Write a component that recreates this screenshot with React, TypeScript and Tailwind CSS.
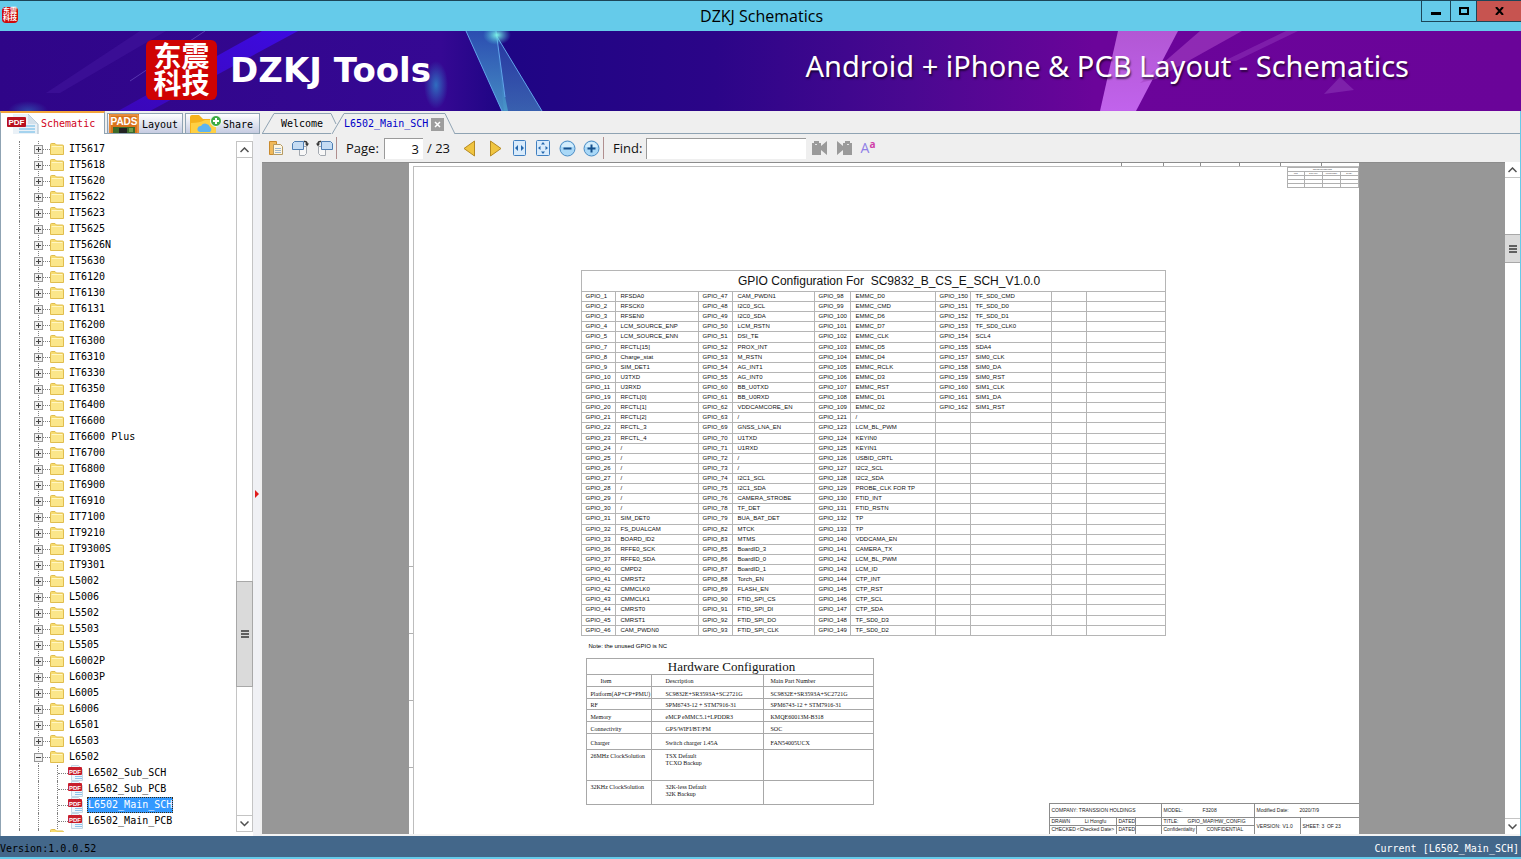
import React, { useState } from "react";

const closedFolders = [
  "IT5617", "IT5618", "IT5620", "IT5622", "IT5623", "IT5625", "IT5626N", "IT5630", "IT6120",
  "IT6130", "IT6131", "IT6200", "IT6300", "IT6310", "IT6330", "IT6350", "IT6400", "IT6600",
  "IT6600 Plus", "IT6700", "IT6800", "IT6900", "IT6910", "IT7100", "IT9210", "IT9300S", "IT9301",
  "L5002", "L5006", "L5502", "L5503", "L5505", "L6002P", "L6003P", "L6005", "L6006", "L6501", "L6503",
];

const openFiles = ["L6502_Sub_SCH", "L6502_Sub_PCB", "L6502_Main_SCH", "L6502_Main_PCB"];

const pinGroups: [number[], string[]][] = [
  [
    [1, 2, 3, 4, 5, 7, 8, 9, 10, 11, 19, 20, 21, 22, 23, 24, 25, 26, 27, 28, 29, 30, 31, 32, 33, 36, 37, 40, 41, 42, 43, 44, 45, 46],
    [
      "RFSDA0", "RFSCK0", "RFSEN0", "LCM_SOURCE_ENP", "LCM_SOURCE_ENN", "RFCTL[15]", "Charge_stat", "SIM_DET1",
      "U3TXD", "U3RXD", "RFCTL[0]", "RFCTL[1]", "RFCTL[2]", "RFCTL_3", "RFCTL_4", "/", "/", "/", "/", "/", "/", "/",
      "SIM_DET0", "FS_DUALCAM", "BOARD_ID2", "RFFE0_SCK", "RFFE0_SDA", "CMPD2", "CMRST2", "CMMCLK0", "CMMCLK1",
      "CMRST0", "CMRST1", "CAM_PWDN0",
    ],
  ],
  [
    [47, 48, 49, 50, 51, 52, 53, 54, 55, 60, 61, 62, 63, 69, 70, 71, 72, 73, 74, 75, 76, 78, 79, 82, 83, 85, 86, 87, 88, 89, 90, 91, 92, 93],
    [
      "CAM_PWDN1", "I2C0_SCL", "I2C0_SDA", "LCM_RSTN", "DSI_TE", "PROX_INT", "M_RSTN", "AG_INT1", "AG_INT0",
      "BB_U0TXD", "BB_U0RXD", "VDDCAMCORE_EN", "/", "GNSS_LNA_EN", "U1TXD", "U1RXD", "/", "/", "I2C1_SCL",
      "I2C1_SDA", "CAMERA_STROBE", "TF_DET", "BUA_BAT_DET", "MTCK", "MTMS", "BoardID_3", "BoardID_0", "BoardID_1",
      "Torch_EN", "FLASH_EN", "FTID_SPI_CS", "FTID_SPI_DI", "FTID_SPI_DO", "FTID_SPI_CLK",
    ],
  ],
  [
    [98, 99, 100, 101, 102, 103, 104, 105, 106, 107, 108, 109, 121, 123, 124, 125, 126, 127, 128, 129, 130, 131, 132, 133, 140, 141, 142, 143, 144, 145, 146, 147, 148, 149],
    [
      "EMMC_D0", "EMMC_CMD", "EMMC_D6", "EMMC_D7", "EMMC_CLK", "EMMC_D5", "EMMC_D4", "EMMC_RCLK", "EMMC_D3",
      "EMMC_RST", "EMMC_D1", "EMMC_D2", "/", "LCM_BL_PWM", "KEYIN0", "KEYIN1", "USBID_CRTL", "I2C2_SCL", "I2C2_SDA",
      "PROBE_CLK FOR TP", "FTID_INT", "FTID_RSTN", "TP", "TP", "VDDCAMA_EN", "CAMERA_TX", "LCM_BL_PWM", "LCM_ID",
      "CTP_INT", "CTP_RST", "CTP_SCL", "CTP_SDA", "TF_SD0_D3", "TF_SD0_D2",
    ],
  ],
  [
    [150, 151, 152, 153, 154, 155, 157, 158, 159, 160, 161, 162],
    [
      "TF_SD0_CMD", "TF_SD0_D0", "TF_SD0_D1", "TF_SD0_CLK0", "SCL4", "SDA4", "SIM0_CLK", "SIM0_DA", "SIM0_RST",
      "SIM1_CLK", "SIM1_DA", "SIM1_RST",
    ],
  ],
  [[], []],
];

const hardware = [
  { row: "h-[12px]", cells: ["Platform(AP+CP+PMU)", "SC9832E+SR3593A+SC2721G", "SC9832E+SR3593A+SC2721G"] },
  { row: "h-[11px]", cells: ["RF", "SPM6743-12 + STM7916-31", "SPM6743-12 + STM7916-31"] },
  { row: "h-[12px]", cells: ["Memory", "eMCP eMMC5.1+LPDDR3", "KMQE60013M-B318"] },
  { row: "h-[12px]", cells: ["Connectivity", "GPS/WIFI/BT/FM", "SOC"] },
  { row: "h-[16px]", cells: ["Charger", "Switch charger 1.45A", "FAN54005UCX"] },
  { row: "h-[31px] align-top", cells: ["26MHz ClockSolution", "TSX Default\nTCXO Backup", ""] },
  { row: "h-[24px] align-top", cells: ["32KHz ClockSolution", "32K-less Default\n32K Backup", ""] },
];

const FolderIcon = () => (
  <svg width="14" height="12" viewBox="0 0 14 12" className="shrink-0">
    <path d="M.5 1.5q0-1 1-1h3.5l1.5 1.5h6q1 0 1 1v8.5h-13z" fill="#f7dc6f" stroke="#e0bd4e" />
    <path d="M1 4h12v7H1z" fill="#fbe68a" />
    <path d="M1.500 3.500h11" stroke="#fff6c4" />
  </svg>
);

const PdfIcon = () => (
  <svg width="16" height="16" viewBox="0 0 16 16" className="shrink-0">
    <path d="M3.500 .5h7l4 4v11h-11z" fill="#eef6fc" stroke="#c3d6e4" />
    <path d="M7 11.500h7M7 13.500h7" stroke="#8fc3ea" />
    <rect y="2" width="14" height="8" rx="1" fill="#c81e2b" />
    <text x="7" y="8.500" fontSize="6" fontWeight="bold" fill="#fff" textAnchor="middle" fontFamily="Liberation Sans">
      PDF
    </text>
  </svg>
);

const PdfTabIcon = () => (
  <svg width="32" height="20" viewBox="0 0 32 20" className="shrink-0">
    <path d="M6 0h15l10 10v10H6z" fill="#eaf1f7" />
    <path d="M21 0l10 10v10" stroke="#a9bccb" fill="none" />
    <path d="M21 0v10h10z" fill="#d3e0ea" />
    <path d="M14 12h14M12 15h16M12 18h16" stroke="#a5d3ee" strokeWidth="2" />
    <rect y="3" width="19" height="10" rx="1" fill="#b80f1e" />
    <text x="9.500" y="11" fontSize="8" fontWeight="bold" fill="#fff" textAnchor="middle" fontFamily="Liberation Sans">
      PDF
    </text>
  </svg>
);

const PadsIcon = () => (
  <svg width="30" height="19" viewBox="0 0 30 19" className="shrink-0">
    <rect width="30" height="19" fill="#d9731c" />
    <path d="M1 19V1h28v18" stroke="#f2a65a" fill="none" />
    <path d="M4 13h22v6H4z" fill="#3c6b2a" />
    <path d="M10 14h8v5h-8z" fill="#222" />
    <path d="M20 15h4M20 17h4" stroke="#a6d46f" />
    <text x="15" y="11" fontSize="10" fontWeight="bold" fill="#fff" textAnchor="middle" fontFamily="Liberation Sans">
      PADS
    </text>
  </svg>
);

const ShareIcon = () => (
  <svg width="32" height="18" viewBox="0 0 32 18" className="shrink-0">
    <path d="M0 2q0-2 2-2h7l4 4h10q3 0 3 3v11H0z" fill="#f5b21c" />
    <path d="M1 8q9 0 14-3h11v13H1z" fill="#ffd043" />
    <path d="M10 17a3 3 0 0 1 1-6 5 5 0 0 1 9 1 3 3 0 0 1 0 5z" fill="#5fb4ee" />
    <circle cx="26" cy="6" r="5.500" fill="#3cab45" stroke="#fff" />
    <path d="M26 3v6M23 6h6" stroke="#fff" strokeWidth="2" />
  </svg>
);

const Logo = ({ small = false }: { small?: boolean }) => (
  <div
    className={
      small
        ? "w-4 h-4 rounded-sm bg-[#cf0a0a] text-white text-[7px] leading-[7px] font-bold text-center pt-px"
        : "w-[71px] h-[60px] rounded-md bg-[#cf0303] text-white text-[28px] leading-[27px] font-bold text-center pt-[2px]"
    }
  >
    东震
    <br />
    科技
  </div>
);

const Arrow = ({ down = false }: { down?: boolean }) => (
  <svg width="9" height="6" viewBox="0 0 9 6">
    <path d={down ? "M.5 .5l4 4 4-4" : "M.5 5l4-4 4 4"} fill="none" stroke="#505050" strokeWidth="1.500" />
  </svg>
);

const ScrollButton = ({ down = false }: { down?: boolean }) => (
  <button
    type="button"
    aria-label={down ? "Scroll down" : "Scroll up"}
    className={`h-4 w-full shrink-0 flex items-center justify-center bg-white border-[#c4c4c4] ${down ? "border-t" : "border-b"}`}
  >
    <Arrow down={down} />
  </button>
);

const Thumb = () => (
  <span className="flex flex-col gap-px">
    <span className="block w-2 h-0.5 bg-[#606060]" />
    <span className="block w-2 h-0.5 bg-[#606060]" />
    <span className="block w-2 h-0.5 bg-[#606060]" />
  </span>
);

const ToolButton = ({ label, children }: { label: string; children: React.ReactNode }) => (
  <button type="button" aria-label={label} className="w-6 h-6 flex items-center justify-center shrink-0">
    {children}
  </button>
);

const RotateIcon = ({ left = false }: { left?: boolean }) => (
  <svg width="17" height="17" viewBox="0 0 17 17">
    <g transform={left ? "translate(17 0) scale(-1 1)" : undefined}>
      <path d="M7.500 6.500h7v7l-2 2h-5z" fill="#f7f7f7" stroke="#a3a9b0" />
      <path d="M.5 3.500l2-2h9v8H.5z" fill="#c5dcf3" stroke="#4f7fb3" />
      <path d="M12 1.500q3-.5 3 2.500" fill="none" stroke="#333" strokeWidth="1.500" />
      <path d="M13 3.500h4l-2 3z" fill="#333" />
    </g>
  </svg>
);

const ZoomIcon = ({ plus = false }: { plus?: boolean }) => (
  <svg width="17" height="17" viewBox="0 0 17 17">
    <circle cx="8.500" cy="8.500" r="7.500" fill="#a9d8f7" stroke="#4a8cc4" />
    <path d="M2.500 7a6 5 0 0 1 12 0z" fill="#d3edfc" />
    <path d={plus ? "M4.500 8.500h8M8.500 4.500v8" : "M4.500 8.500h8"} stroke="#16508c" strokeWidth="2" />
  </svg>
);

const BannerArt = () => (
  <svg className="absolute inset-0 w-full h-full" viewBox="0 0 1521 80" preserveAspectRatio="none">
    <defs>
      <linearGradient id="base">
        <stop offset="0" stopColor="#2f0588" />
        <stop offset=".29" stopColor="#350893" />
        <stop offset=".33" stopColor="#1e0584" />
        <stop offset=".47" stopColor="#2b0588" />
        <stop offset=".6" stopColor="#4a0891" />
        <stop offset=".72" stopColor="#6b049a" />
        <stop offset="1" stopColor="#6a0499" />
      </linearGradient>
      <linearGradient id="beam" x1="1" y1="0" x2="0" y2="1">
        <stop offset="0" stopColor="#3d0be0" />
        <stop offset="1" stopColor="#3a06b8" />
      </linearGradient>
      <linearGradient id="shard" x1="0" y1="0" x2="0" y2="1">
        <stop offset="0" stopColor="#2c55b5" />
        <stop offset="1" stopColor="#4a9ccb" />
      </linearGradient>
      <linearGradient id="pink" x1="0" y1="0" x2="0" y2="1">
        <stop offset="0" stopColor="#b257d4" />
        <stop offset="1" stopColor="#c163ec" />
      </linearGradient>
      <radialGradient id="glow">
        <stop offset="0" stopColor="#2f78c4" stopOpacity=".9" />
        <stop offset="1" stopColor="#2f78c4" stopOpacity="0" />
      </radialGradient>
      <radialGradient id="spark">
        <stop offset="0" stopColor="#7df3e6" />
        <stop offset="1" stopColor="#4ac0dd" stopOpacity="0" />
      </radialGradient>
    </defs>
    <rect width="1521" height="80" fill="url(#base)" />
    <path d="M262 0h36L150 80h-32z" fill="url(#beam)" />
    <path d="M140 0h26L60 62H46z" fill="#4d1fa8" opacity=".35" />
    <path d="M205 0L130 50" stroke="#6a4cc0" opacity=".7" />
    <ellipse cx="436" cy="54" rx="12" ry="24" fill="url(#glow)" />
    <ellipse cx="28" cy="80" rx="20" ry="10" fill="url(#glow)" opacity=".6" />
    <path d="M466 0h30l8 60 4 20h-6z" fill="url(#shard)" opacity=".9" />
    <path d="M496 4l46 76h-38z" fill="url(#shard)" opacity=".6" />
    <path d="M466 0l36 80M496 0l9 66M496 4l46 76" stroke="#61a5ea" fill="none" />
    <ellipse cx="497" cy="4" rx="14" ry="10" fill="url(#spark)" />
    <path d="M1118 0h60l-42 80h-36z" fill="url(#pink)" />
    <path d="M1200 0h42l-86 48-16 4z" fill="#a744c6" opacity=".6" />
    <path d="M1286 0h12l-62 30h-12z" fill="#8a2fb5" opacity=".6" />
    <path d="M1340 46l14 13-30 4z" fill="#8a35b5" opacity=".6" />
  </svg>
);

const Tree = () => {
  const [selected, setSelected] = useState("L6502_Main_SCH");

  const folderRow = (name: string, open: boolean) => (
    <div className="flex items-center h-4">
      <span className="w-[18px] shrink-0" />
      <span className="w-[15px] h-4 border-l border-dotted border-[#808080] shrink-0" />
      <button type="button" aria-label={`Toggle ${name}`} className="w-[9px] h-4 shrink-0">
        <svg width="9" height="16" viewBox="0 0 9 16">
          <path d="M4.500 0v16" stroke="#808080" strokeDasharray="1 1" />
          <rect x=".5" y="4.500" width="8" height="8" fill="#f0f0f0" stroke="#969696" />
          <path d={open ? "M2 8.500h5" : "M2 8.500h5M4.500 6v5"} stroke="#444" />
        </svg>
      </button>
      <span className="w-[7px] border-t border-dotted border-[#808080] shrink-0" />
      <FolderIcon />
      <span className="pl-[5px] whitespace-nowrap">{name}</span>
    </div>
  );

  return (
    <ul className="flex-1 min-w-0 overflow-hidden">
      {closedFolders.map((name) => (
        <li key={name}>{folderRow(name, false)}</li>
      ))}
      <li>
        {folderRow("L6502", true)}
        <ul>
          {openFiles.map((file) => (
            <li key={file} className="flex items-center h-4">
              <span className="w-[18px] shrink-0" />
              <span className="w-[19px] h-4 border-l border-dotted border-[#808080] shrink-0" />
              <span className="w-[19px] h-4 border-l border-dotted border-[#808080] shrink-0" />
              <span className="flex items-center w-[11px] h-4 border-l border-dotted border-[#808080] shrink-0">
                <span className="w-full border-t border-dotted border-[#808080]" />
              </span>
              <PdfIcon />
              <button
                type="button"
                onClick={() => setSelected(file)}
                className={`ml-[3px] h-4 px-px whitespace-nowrap ${
                  selected === file ? "bg-[#3399ff] text-white outline-1 -outline-offset-1 outline-dotted outline-[#3a2a10]" : ""
                }`}
              >
                {file}
              </button>
            </li>
          ))}
        </ul>
      </li>
      <li className="flex h-4 pl-[18px]">
        <span className="w-[19px] border-l border-dotted border-[#808080]" />
        <span className="w-3 border-l border-dotted border-[#808080]" />
        <FolderIcon />
      </li>
    </ul>
  );
};

const Toolbar = () => (
  <div className="flex items-center h-7 shrink-0 bg-[#efefef] pl-[2px] font-['Open_Sans','Noto_Sans',sans-serif] text-[13px] text-[#111]">
    <ToolButton label="Open">
      <svg width="16" height="16" viewBox="0 0 16 16">
        <path d="M1.500 1.500h7v13h-7z" fill="#f0b95a" stroke="#c98a2c" />
        <path d="M5.500 4.500h7l2 2v8h-9z" fill="#fdf6e3" stroke="#b59a62" />
        <path d="M7 8.500h6M7 10.500h6M7 12.500h6" stroke="#9db7cf" />
      </svg>
    </ToolButton>
    <ToolButton label="Rotate right">
      <RotateIcon />
    </ToolButton>
    <ToolButton label="Rotate left">
      <RotateIcon left />
    </ToolButton>
    <span className="w-px h-[22px] bg-[#b08f8f]" />
    <label htmlFor="page" className="ml-[9px] w-[38px]">
      Page:
    </label>
    <input
      id="page"
      defaultValue="3"
      className="w-[39px] h-[21px] bg-white border-t border-l border-[#9a9a9a] pr-1 text-right outline-none"
    />
    <span className="ml-1 w-[30px] whitespace-nowrap">/ 23</span>
    <ToolButton label="Previous page">
      <svg width="13" height="17" viewBox="0 0 13 17">
        <path d="M11.500 1v15L1 8.500z" fill="#f0c541" stroke="#b58a22" />
      </svg>
    </ToolButton>
    <span className="w-[2px]" />
    <ToolButton label="Next page">
      <svg width="13" height="17" viewBox="0 0 13 17">
        <path d="M1.500 1v15L12 8.500z" fill="#f0c541" stroke="#b58a22" />
      </svg>
    </ToolButton>
    <ToolButton label="Fit width">
      <svg width="13" height="16" viewBox="0 0 13 16">
        <rect x=".5" y=".5" width="12" height="15" rx="1" fill="#d9ebfb" stroke="#3f7fc0" />
        <path d="M5 5v6L2 8zM8 5v6l3-3z" fill="#2468ae" />
      </svg>
    </ToolButton>
    <ToolButton label="Fit page">
      <svg width="14" height="16" viewBox="0 0 14 16">
        <rect x=".5" y=".5" width="13" height="15" rx="1" fill="#d9ebfb" stroke="#3f7fc0" />
        <path d="M7 2l2 2.500H5zM7 14l2-2.500H5zM2 8l2.500-2v4zM12 8L9.500 6v4z" fill="#2468ae" />
      </svg>
    </ToolButton>
    <ToolButton label="Zoom out">
      <ZoomIcon />
    </ToolButton>
    <ToolButton label="Zoom in">
      <ZoomIcon plus />
    </ToolButton>
    <span className="w-px h-[22px] bg-[#b08f8f]" />
    <label htmlFor="find" className="ml-[9px] w-[33px]">
      Find:
    </label>
    <input id="find" className="w-40 h-[21px] bg-white border-t border-l border-[#9a9a9a] px-1 outline-none" />
    <span className="w-[2px]" />
    <ToolButton label="Find previous">
      <svg width="16" height="16" viewBox="0 0 16 16" fill="#9a9a9a">
        <path d="M0 3h2V1h5v2h2v3l6-5v14l-6-5v5H0z" />
        <path d="M3 4h2v1H3z" fill="#e4e4e4" />
      </svg>
    </ToolButton>
    <ToolButton label="Find next">
      <svg width="16" height="16" viewBox="0 0 16 16" fill="#9a9a9a">
        <path d="M16 3h-2V1H9v2H7v3L1 1v14l6-5v5h9z" />
        <path d="M11 4h2v1h-2z" fill="#e4e4e4" />
      </svg>
    </ToolButton>
    <ToolButton label="Match case">
      <span className="flex items-start text-[#8f7fe6] text-[14px] leading-4">
        A<span className="text-[#cf3fa8] text-[10px] leading-[8px] font-bold">a</span>
      </span>
    </ToolButton>
  </div>
);

const GpioTable = () => (
  <table className="w-[585px] h-[366px] table-fixed border-collapse text-[6px] leading-[9px] text-[#111]">
    <colgroup>
      <col className="w-[34px]" />
      <col className="w-[83px]" />
      <col className="w-[34px]" />
      <col className="w-[82px]" />
      <col className="w-[36px]" />
      <col className="w-[85px]" />
      <col className="w-[35px]" />
      <col className="w-[81px]" />
      <col className="w-[35px]" />
      <col className="w-[79px]" />
    </colgroup>
    <thead>
      <tr className="h-[21px]">
        <th colSpan={10} className="border border-[#b5b5b5] p-0 pl-8 font-normal text-[12px] leading-[19px] whitespace-pre">
          GPIO Configuration For  SC9832_B_CS_E_SCH_V1.0.0
        </th>
      </tr>
    </thead>
    <tbody>
      {pinGroups[0][0].map((_, row) => (
        <tr key={row}>
          {pinGroups.map(([pins, names], group) => (
            <React.Fragment key={group}>
              <td className="border border-[#b5b5b5] p-0 pl-[4px] whitespace-nowrap">
                {pins[row] ? `GPIO_${pins[row]}` : ""}
              </td>
              <td className="border border-[#b5b5b5] p-0 pl-[5px] whitespace-nowrap">{names[row] ?? ""}</td>
            </React.Fragment>
          ))}
        </tr>
      ))}
    </tbody>
  </table>
);

const HardwareTable = () => (
  <table className="w-[287px] table-fixed border-collapse font-['Liberation_Serif',serif] text-[6px] leading-[8px] text-[#111]">
    <colgroup>
      <col className="w-[65px]" />
      <col className="w-[112px]" />
      <col className="w-[110px]" />
    </colgroup>
    <thead>
      <tr className="h-[16px]">
        <th colSpan={3} className="border border-[#a8a8a8] p-0 pl-1 font-normal text-[13px] leading-[15px]">
          Hardware Configuration
        </th>
      </tr>
      <tr className="h-[12px]">
        <th className="border border-[#a8a8a8] p-0 pl-[14px] font-normal text-left">Item</th>
        <th className="border border-[#a8a8a8] p-0 pl-[14px] font-normal text-left">Description</th>
        <th className="border border-[#a8a8a8] p-0 pl-[7px] font-normal text-left">Main Part Number</th>
      </tr>
    </thead>
    <tbody>
      {hardware.map(({ row, cells }) => (
        <tr key={cells[0]} className={row}>
          <td className="border border-[#a8a8a8] p-0 pt-[3px] pl-[4px] leading-[7px] whitespace-nowrap">{cells[0]}</td>
          <td className="border border-[#a8a8a8] p-0 pt-[3px] pl-[14px] leading-[7px] whitespace-pre">{cells[1]}</td>
          <td className="border border-[#a8a8a8] p-0 pt-[3px] pl-[7px] leading-[7px] whitespace-nowrap">{cells[2]}</td>
        </tr>
      ))}
    </tbody>
  </table>
);

const TitleBlock = () => (
  <div className="flex w-[310px] h-[31px] shrink-0 border-t border-l border-[#8c8c8c] text-[5px] leading-[7px] text-[#222] whitespace-nowrap">
    <div className="w-[112px] border-r border-[#8c8c8c]">
      <div className="h-[14px] pt-[3px] pl-[2px] border-b border-[#8c8c8c]">COMPANY: TRANSSION HOLDINGS</div>
      <div className="flex h-2 border-b border-[#8c8c8c]">
        <span className="w-[26px] pl-[2px]">DRAWN</span>
        <span className="w-[41px] text-center border-r border-[#8c8c8c]">Li Hongfu</span>
        <span className="w-[19px] pl-[2px] border-r border-[#8c8c8c]">DATED</span>
      </div>
      <div className="flex h-2">
        <span className="w-[26px] pl-[2px]">CHECKED</span>
        <span className="w-[41px] text-center border-r border-[#8c8c8c]">&lt;Checked Date&gt;</span>
        <span className="w-[19px] pl-[2px] border-r border-[#8c8c8c]">DATED</span>
      </div>
    </div>
    <div className="w-[93px] border-r border-[#8c8c8c]">
      <div className="flex h-[14px] pt-[3px] pl-[2px] border-b border-[#8c8c8c]">
        <span className="w-[39px]">MODEL:</span>
        <span>F3208</span>
      </div>
      <div className="flex h-2 pl-[2px] border-b border-[#8c8c8c]">
        <span className="w-6">TITLE:</span>
        <span>GPIO_MAP/HW_CONFIG</span>
      </div>
      <div className="flex h-2 pl-[2px]">
        <span className="w-[33px] border-r border-[#8c8c8c]">Confidentiality</span>
        <span className="pl-[10px]">CONFIDENTIAL</span>
      </div>
    </div>
    <div className="flex-1">
      <div className="flex h-[14px] pt-[3px] pl-[2px] border-b border-[#8c8c8c]">
        <span className="w-[43px]">Modified Date:</span>
        <span>2020/7/9</span>
      </div>
      <div className="flex h-4 items-center pl-[2px]">
        <span className="w-[26px]">VERSION:</span>
        <span className="w-[17px]">V1.0</span>
        <span className="pl-[2px] h-4 leading-4 border-l border-[#8c8c8c]">SHEET: 3&nbsp; OF 23</span>
      </div>
    </div>
  </div>
);

const RevisionTable = () => (
  <table className="w-[72px] table-fixed border-collapse text-[2px] leading-[3px] text-[#555]">
    <thead>
      <tr>
        <th colSpan={4} className="h-[4px] p-0 border border-[#b0b0b0]">REVISION RECORD</th>
      </tr>
      <tr>
        <th className="h-[4px] p-0 border border-[#b0b0b0]">LTR</th>
        <th className="h-[4px] p-0 border border-[#b0b0b0]">ECO NO:</th>
        <th className="h-[4px] p-0 border border-[#b0b0b0]">APPROVED:</th>
        <th className="h-[4px] p-0 border border-[#b0b0b0]">DATE:</th>
      </tr>
    </thead>
    <tbody>
      {[1, 2, 3].map((row) => (
        <tr key={row}>
          <td className="h-[4px] p-0 border border-[#b0b0b0]" />
          <td className="h-[4px] p-0 border border-[#b0b0b0]" />
          <td className="h-[4px] p-0 border border-[#b0b0b0]" />
          <td className="h-[4px] p-0 border border-[#b0b0b0]" />
        </tr>
      ))}
    </tbody>
  </table>
);

const SheetPage = () => (
  <div className="w-[950px] shrink-0 mx-auto flex flex-col bg-white overflow-hidden font-['Liberation_Sans',sans-serif]">
    <div className="flex h-[3px] justify-end shrink-0 pr-[37px]">
      <span className="w-[42px] border-l border-[#8c8c8c]" />
      <span className="w-[37px] border-l border-[#8c8c8c]" />
      <span className="w-[39px] border-l border-[#8c8c8c]" />
      <span className="w-[41px] border-l border-[#8c8c8c]" />
      <span className="w-[42px] border-x border-[#8c8c8c]" />
    </div>
    <div className="flex flex-1 min-h-0">
      <div className="w-[4px] shrink-0 flex flex-col justify-end">
        <span className="h-[67px] border-t border-[#b0b0b0]" />
        <span className="h-[67px] border-t border-[#b0b0b0]" />
        <span className="h-[67px] border-t border-[#b0b0b0]" />
        <span className="h-[67px] border-t border-[#b0b0b0]" />
      </div>
      <div className="flex-1 min-w-0 flex flex-col border-t border-l border-[#bdbdbd]">
        <div className="self-end shrink-0">
          <RevisionTable />
        </div>
        <div className="flex flex-1 min-h-0 justify-between items-end">
          <div className="self-start w-[454px] pl-[167px] pt-[82px] shrink-0">
            <GpioTable />
            <p className="pl-2 pt-[6px] text-[6px] leading-[8px]">Note: the unused GPIO is NC</p>
            <div className="pl-[5px] pt-[8px]">
              <HardwareTable />
            </div>
          </div>
          <TitleBlock />
        </div>
      </div>
    </div>
  </div>
);

const DocumentTabs = () => (
  <div className="flex items-end h-[23px] shrink-0 bg-[#efefef]">
    <div className="flex h-[21px] border-b border-[#8fa3b3]">
      <svg width="12" height="21" viewBox="0 0 12 21">
        <path d="M0 21L12 .5" fill="none" stroke="#8fa3b3" />
      </svg>
      <button type="button" className="w-[57px] pl-[7px] border-t border-[#8fa3b3] text-left whitespace-nowrap">
        Welcome
      </button>
    </div>
    <div className="flex h-[21px]">
      <svg width="13" height="21" viewBox="0 0 13 21">
        <path d="M0 .5L5 11M1 21L13 .5" fill="none" stroke="#8fa3b3" />
      </svg>
      <div className="flex items-center w-[101px] border-t border-[#8fa3b3] text-[#0000c8]">
        <button type="button" className="w-[87px] whitespace-nowrap text-left">
          L6502_Main_SCH
        </button>
        <button type="button" aria-label="Close tab" className="w-[13px] h-[13px] shrink-0 bg-[#9d9d9d] flex items-center justify-center">
          <svg width="7" height="7" viewBox="0 0 7 7">
            <path d="M1 1l5 5M6 1L1 6" stroke="#fff" strokeWidth="1.500" />
          </svg>
        </button>
      </div>
      <svg width="10" height="21" viewBox="0 0 10 21">
        <path d="M0 .5L10 21" fill="none" stroke="#8fa3b3" />
      </svg>
    </div>
    <div className="flex-1 border-b border-[#8fa3b3]" />
  </div>
);

const App = () => (
  <div className="h-screen flex flex-col overflow-hidden bg-[#efefef] font-['DejaVu_Sans_Mono','Noto_Sans_CJK_SC',monospace] text-[10px] leading-4 text-black">
    <header className="flex h-[31px] shrink-0 bg-[#65cbea] border-t border-[#1c4558]">
      <div className="flex-1 pl-[2px] pt-[6px]">
        <Logo small />
      </div>
      <h1 className="self-center font-['Open_Sans','Noto_Sans',sans-serif] text-[16px] leading-6">DZKJ Schematics</h1>
      <div className="flex-1 flex justify-end">
        <button type="button" aria-label="Minimize" className="w-[29px] h-[21px] flex items-center justify-center border-l border-b border-[#1c4558]">
          <span className="w-[10px] h-[3px] mt-1 bg-black" />
        </button>
        <button type="button" aria-label="Maximize" className="w-[26px] h-[21px] flex items-center justify-center border-l border-b border-[#1c4558]">
          <span className="w-[10px] h-2 border-2 border-black" />
        </button>
        <button type="button" aria-label="Close" className="w-[45px] h-[21px] flex items-center justify-center border-l border-b border-[#1c4558] bg-[#c75450]">
          <svg width="9" height="8" viewBox="0 0 9 8">
            <path d="M1 0l7 8M8 0L1 8" stroke="#000" strokeWidth="2" />
          </svg>
        </button>
      </div>
    </header>

    <div className="relative h-20 shrink-0 overflow-hidden">
      <BannerArt />
      <div className="relative flex items-center h-full pl-[146px] pr-[112px] pb-[2px] text-white">
        <div className="font-['Noto_Sans_CJK_SC',sans-serif]">
          <Logo />
        </div>
        <span className="ml-[13px] font-['DejaVu_Sans',sans-serif] font-bold text-[34px] leading-10">DZKJ Tools</span>
        <span className="ml-auto pb-[8px] font-['Noto_Sans',sans-serif] text-[29px] leading-10 whitespace-nowrap [text-shadow:1px_2px_2px_rgba(0,0,0,0.6)]">
          Android + iPhone &amp; PCB Layout - Schematics
        </span>
      </div>
    </div>

    <main className="flex flex-1 min-h-0 border-r border-[#65cbea]">
      <aside className="w-[260px] shrink-0 flex flex-col">
        <nav className="flex items-end h-[23px] shrink-0 gap-[2px] border-b border-[#8fa3b3]">
          <button type="button" className="flex items-center w-[105px] h-[23px] pl-[6px] gap-[2px] -mb-px bg-white border-t-2 border-x border-t-[#f3a43a] border-x-[#8fa3b3] text-[#d0021b]">
            <PdfTabIcon />
            Schematic
          </button>
          <button type="button" className="flex items-end w-[76px] h-5 pl-px gap-[3px] bg-linear-to-b from-white to-[#c6cce2] border-t border-x border-[#8fa3b3]">
            <PadsIcon />
            Layout
          </button>
          <button type="button" className="flex items-end w-[75px] h-5 pl-[4px] gap-px bg-linear-to-b from-white to-[#c6cce2] border-t border-x border-[#8fa3b3]">
            <ShareIcon />
            Share
          </button>
        </nav>
        <div className="flex flex-1 min-h-0 bg-[#f7f8fb] border-l border-[#8fa3b3]">
          <div className="flex flex-1 min-w-0 bg-white pt-[7px] pb-[4px]">
            <Tree />
            <div className="flex flex-col w-[17px] shrink-0 bg-white border border-[#c4c4c4]">
              <ScrollButton />
              <span className="flex-[425]" />
              <span className="flex-[104] flex items-center justify-center -mx-px bg-[#dadada] border border-[#a8a8a8]">
                <Thumb />
              </span>
              <span className="flex-[129]" />
              <ScrollButton down />
            </div>
          </div>
          <div className="flex items-center w-[7px] pl-[2px] pt-[18px] shrink-0 bg-[#f0f1f5]">
            <svg width="4" height="8" viewBox="0 0 4 8">
              <path d="M0 0l4 4-4 4z" fill="#e01b1b" />
            </svg>
          </div>
        </div>
      </aside>

      <section className="flex-1 min-w-0 flex flex-col pl-[2px]">
        <DocumentTabs />
        <Toolbar />
        <div className="flex flex-1 min-h-0 border-b-2 border-[#f4f4f4]">
          <div className="flex-1 min-w-0 flex bg-[#979797] border-t border-[#8c8c8c] overflow-hidden">
            <SheetPage />
          </div>
          <div className="flex flex-col w-[15px] shrink-0 bg-white">
            <ScrollButton />
            <span className="flex-[56]" />
            <span className="flex-[28] flex items-center justify-center bg-[#dadada] border-y border-[#a8a8a8]">
              <Thumb />
            </span>
            <span className="flex-[558]" />
            <ScrollButton down />
          </div>
        </div>
      </section>
    </main>

    <footer className="flex items-end justify-between h-[23px] shrink-0 bg-[#43678a] border-b-2 border-[#65cbea] pr-[2px]">
      <span>Version:1.0.0.52</span>
      <span className="text-white">Current [L6502_Main_SCH]</span>
    </footer>
  </div>
);

export default App;
